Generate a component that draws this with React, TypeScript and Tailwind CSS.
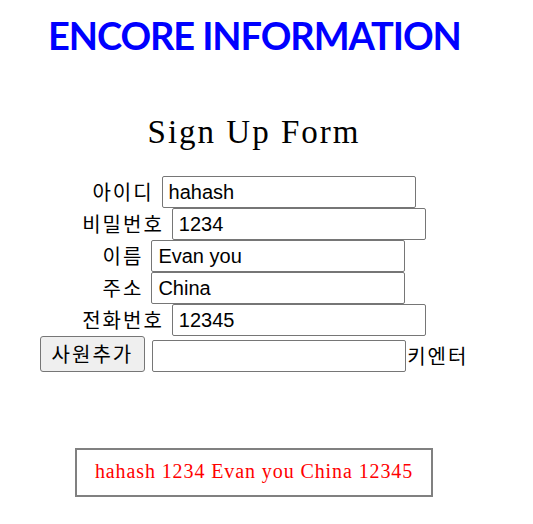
import React, { useState } from 'react';

type Employee = { id: string; pw: string; name: string; addr: string; tel: string };

const inputCls =
  'w-[254px] h-[32px] border border-[#767676] rounded-[2px] px-[6px] text-[20px] text-black bg-white outline-none';

function Row({ label, value, onChange }: { label: string; value: string; onChange: (v: string) => void }) {
  return (
    <div className="flex justify-center items-center h-[32px]">
      <span className="mr-[8px] text-[20px] leading-[32px] tracking-[2px]">{label}</span>
      <input
        type="text"
        value={value}
        onChange={e => onChange(e.target.value)}
        className={inputCls}
        style={{ fontFamily: '"Liberation Sans", Arial, sans-serif' }}
      />
    </div>
  );
}

export default function App() {
  const [emp, setEmp] = useState<Employee>({
    id: 'hahash',
    pw: '1234',
    name: 'Evan you',
    addr: 'China',
    tel: '12345',
  });
  const [added, setAdded] = useState<Employee>(emp);
  const [enter, setEnter] = useState('');

  const set = (key: keyof Employee) => (v: string) => setEmp({ ...emp, [key]: v });

  return (
    <div
      className="w-[508px] bg-white text-black"
      style={{ fontFamily: '"Noto Sans CJK KR", "Noto Sans", sans-serif' }}
    >
      <h1
        className="mt-[13px] pl-[48px] h-[44px] text-[38px] leading-[44px] font-bold text-[#0000ff] tracking-[-1.1px] whitespace-nowrap"
        style={{ fontFamily: 'Lato, "Open Sans", sans-serif' }}
      >
        ENCORE INFORMATION
      </h1>

      <h2
        className="mt-[55px] text-center text-[33px] leading-[40px] tracking-[2px]"
        style={{ fontFamily: '"Liberation Serif", "Times New Roman", serif' }}
      >
        Sign Up Form
      </h2>

      <div className="mt-[24px]">
        <Row label="아이디" value={emp.id} onChange={set('id')} />
        <Row label="비밀번호" value={emp.pw} onChange={set('pw')} />
        <Row label="이름" value={emp.name} onChange={set('name')} />
        <Row label="주소" value={emp.addr} onChange={set('addr')} />
        <Row label="전화번호" value={emp.tel} onChange={set('tel')} />
        <div className="flex justify-center items-end h-[36px]">
          <button
            onClick={() => setAdded(emp)}
            className="h-[36px] px-[11px] mr-[7px] bg-[#efefef] border border-[#767676] rounded-[3px] text-[20px] leading-[32px] tracking-[2px]"
          >
            사원추가
          </button>
          <input
            type="text"
            value={enter}
            onChange={e => setEnter(e.target.value)}
            onKeyDown={e => {
              if (e.key === 'Enter') setAdded(emp);
            }}
            className={inputCls}
          />
          <span className="ml-[1px] h-[32px] text-[20px] leading-[32px] tracking-[2px]">키엔터</span>
        </div>
      </div>

      <div className="mt-[76px] flex justify-center">
        <div
          className="w-[358px] h-[49px] border-2 border-[#808080] flex items-center justify-center text-[20px] text-[#ff0000] tracking-[0.9px] pb-[3px]"
          style={{ fontFamily: '"Liberation Serif", "Times New Roman", serif' }}
        >
          {added.id} {added.pw} {added.name} {added.addr} {added.tel}
        </div>
      </div>
    </div>
  );
}
